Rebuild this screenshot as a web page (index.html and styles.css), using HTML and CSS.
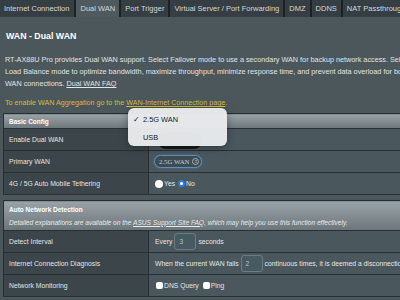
FILE: index.html
```html
<!DOCTYPE html>
<html lang="en">
<head>
    <meta charset="UTF-8">
    <meta name="viewport" content="width=device-width, initial-scale=1.0">
    <title>Dual WAN</title>
    <link rel="stylesheet" href="styles.css">
</head>
<body>
    <div class="tabs">
        <div class="tab first">Internet Connection</div>
        <div class="tab active">Dual WAN</div>
        <div class="tab">Port Trigger</div>
        <div class="tab">Virtual Server / Port Forwarding</div>
        <div class="tab">DMZ</div>
        <div class="tab">DDNS</div>
        <div class="tab">NAT Passthrough</div>
    </div>

    <div class="content">
        <h1 class="page-title">WAN - Dual WAN</h1>

        <p class="desc">
            RT-AX88U Pro provides Dual WAN support. Select Failover mode to use a secondary WAN for backup network access. Select<br>
            Load Balance mode to optimize bandwidth, maximize throughput, minimize response time, and prevent data overload for both<br>
            WAN connections. <a href="#">Dual WAN FAQ</a>
        </p>

        <p class="notice">To enable WAN Aggregation go to the <a href="#">WAN-Internet Connection page</a>.</p>

        <table class="form-table">
            <colgroup>
                <col class="col-label">
                <col>
            </colgroup>
            <tr>
                <th colspan="2" class="head">Basic Config</th>
            </tr>
            <tr>
                <td class="label">Enable Dual WAN</td>
                <td class="value"><div class="field"><span class="switch"></span></div></td>
            </tr>
            <tr>
                <td class="label">Primary WAN</td>
                <td class="value">
                    <div class="field">
                        <div class="select"><span>2.5G WAN</span><span class="arrows">&#8661;</span></div>
                    </div>
                </td>
            </tr>
            <tr>
                <td class="label">4G / 5G Auto Mobile Tethering</td>
                <td class="value">
                    <div class="field">
                        <span class="radio"></span><span>Yes</span>
                        <span class="radio checked"></span><span>No</span>
                    </div>
                </td>
            </tr>
        </table>

        <table class="form-table">
            <colgroup>
                <col class="col-label">
                <col>
            </colgroup>
            <tr>
                <th colspan="2" class="head tall">
                    <div>Auto Network Detection</div>
                    <div class="head-note">Detailed explanations are available on the <a href="#">ASUS Support Site FAQ</a>, which may help you use this function effectively.</div>
                </th>
            </tr>
            <tr>
                <td class="label">Detect Interval</td>
                <td class="value">
                    <div class="field wide">
                        <span>Every</span><span class="box">3</span><span>seconds</span>
                    </div>
                </td>
            </tr>
            <tr>
                <td class="label">Internet Connection Diagnosis</td>
                <td class="value">
                    <div class="field wide">
                        <span>When the current WAN fails</span><span class="box">2</span><span>continuous times, it is deemed a disconnection.</span>
                    </div>
                </td>
            </tr>
            <tr>
                <td class="label">Network Monitoring</td>
                <td class="value">
                    <div class="field">
                        <span class="check"></span><span>DNS Query</span>
                        <span class="check"></span><span>Ping</span>
                    </div>
                </td>
            </tr>
        </table>
    </div>

    <!-- native select popup -->
    <div class="popup">
        <div class="popup-item"><span class="tick">&#10003;</span>2.5G WAN</div>
        <div class="popup-item">USB</div>
    </div>
</body>
</html>
```

FILE: styles.css
```css
body {
    margin: 0;
    padding: 0;
    width: 400px;
    height: 300px;
    overflow: hidden;
    background-color: #4b575b;
    font-family: "Liberation Sans", Arial, sans-serif;
    color: #e4e6e7;
    position: relative;
}

.tabs {
    display: flex;
    height: 17px;
    background-color: #1c2224;
    white-space: nowrap;
    overflow: hidden;
    gap: 2px;
}

.tab {
    flex: none;
    background-color: #353f43;
    color: #d3d8da;
    font-size: 7.5px;
    line-height: 17px;
    padding: 0 4px;
}

.tab.first {
    padding-right: 5px;
}

.tab.active {
    background-color: #4e5a5e;
}

.content {
    width: 440px;
    padding: 13px 0 0 3px;
}

.page-title {
    margin: 0 0 12px 3px;
    font-size: 8.8px;
    line-height: 12px;
    font-weight: bold;
    color: #ffffff;
}

.desc {
    margin: 0 0 7px 2px;
    font-size: 7.25px;
    line-height: 12px;
    white-space: nowrap;
    color: #e2e4e5;
}

.desc a {
    color: #e2e4e5;
}

.notice {
    margin: 0 0 4px 2px;
    font-size: 7.15px;
    line-height: 12px;
    color: #d2bd3c;
}

.notice a {
    color: #d2bd3c;
}

.form-table {
    width: 440px;
    table-layout: fixed;
    border-collapse: collapse;
    margin-bottom: 5px;
    font-size: 6.8px;
}

.col-label {
    width: 145px;
}

.form-table td,
.form-table th {
    border: 1px solid #283034;
    padding: 0 0 0 5px;
    white-space: nowrap;
    overflow: hidden;
}

.head {
    height: 14px;
    text-align: left;
    font-size: 6.5px;
    font-weight: bold;
    color: #ffffff;
    background: linear-gradient(#9aa3a7, #6b767b);
}

.head.tall {
    height: 29px;
}

.head-note {
    margin-top: 6px;
    font-size: 6.6px;
    font-weight: normal;
    font-style: italic;
    color: #e8eaeb;
}

.head-note a {
    color: #e8eaeb;
}

.label {
    height: 21px;
    background-color: #3c464a;
    color: #e2e4e5;
}

.value {
    background-color: #4a585d;
    color: #e4e6e7;
    padding-left: 6px !important;
}

.field {
    display: flex;
    align-items: center;
    gap: 1px;
}

.field.wide {
    gap: 2px;
}

.switch {
    width: 44px;
    height: 17px;
    border-radius: 8px;
    background-color: #16191b;
    margin: 1px 0 0 3px;
}

.select {
    display: flex;
    align-items: center;
    height: 11px;
    padding: 0 2px 0 4px;
    border: 1px solid #5f8fbf;
    border-radius: 7px;
    box-shadow: 0 0 2px #4a7fb5;
    background-color: #3d4b53;
    font-family: "Liberation Serif", "Times New Roman", serif;
    font-size: 6.8px;
    color: #c8ced2;
    margin-left: -1px;
}

.arrows {
    margin-left: 3px;
    width: 5px;
    height: 5px;
    line-height: 5px;
    border: 1px solid #aab4b9;
    border-radius: 50%;
    text-align: center;
    font-family: "DejaVu Sans", sans-serif;
    font-size: 4px;
}

.radio,
.check {
    flex: none;
    width: 8px;
    height: 8px;
    background-color: #ffffff;
}

.radio {
    border-radius: 50%;
}

.radio.checked {
    width: 3px;
    height: 3px;
    border: 2.5px solid #2a7de1;
    margin-left: 2px;
}

.check {
    width: 7px;
    height: 7px;
    border-radius: 2px;
    margin-left: 1px;
}

.check + span + .check {
    margin-left: 3px;
}

.box {
    width: 16px;
    height: 15px;
    line-height: 15px;
    padding-left: 4px;
    border: 1px solid #6b7c82;
    border-radius: 3px;
    background-color: #485a61;
    color: #b9c3c7;
    font-size: 6.5px;
}

.popup {
    position: absolute;
    left: 128px;
    top: 108px;
    width: 99px;
    height: 38px;
    border-radius: 6px;
    background-color: rgba(232, 234, 236, 0.97);
    box-shadow: 0 2px 8px rgba(0, 0, 0, 0.35);
    box-sizing: border-box;
    padding-top: 3px;
    color: #15191b;
    font-size: 7.4px;
}

.popup-item {
    height: 18px;
    line-height: 18px;
    padding-left: 15px;
    position: relative;
}

.tick {
    position: absolute;
    left: 5px;
    font-size: 7.5px;
}
```
